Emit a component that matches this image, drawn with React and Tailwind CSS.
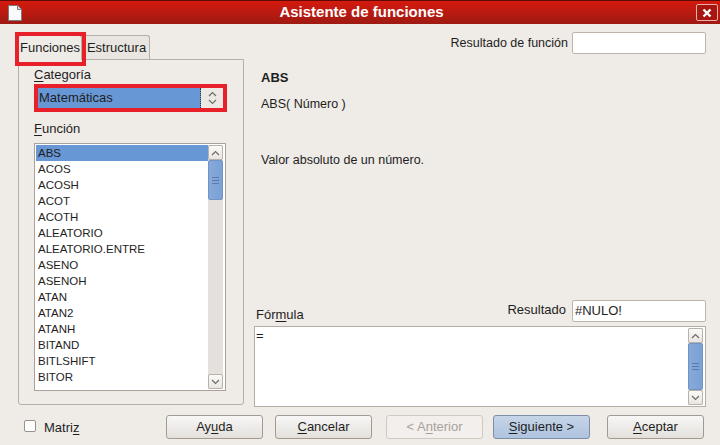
import React from "react";

const font = { fontFamily: '"Liberation Sans", Arial, sans-serif' };

const functions = [
  "ABS",
  "ACOS",
  "ACOSH",
  "ACOT",
  "ACOTH",
  "ALEATORIO",
  "ALEATORIO.ENTRE",
  "ASENO",
  "ASENOH",
  "ATAN",
  "ATAN2",
  "ATANH",
  "BITAND",
  "BITLSHIFT",
  "BITOR",
  "BITRSHIFT",
];

const Key = ({ children }) => <span className="underline underline-offset-2">{children}</span>;

const Arrow = ({ up }) => (
  <svg width="9" height="6" viewBox="0 0 9 6" className="text-[#6f6a64]">
    <path
      d={up ? "M1 5 L4.5 1.5 L8 5" : "M1 1 L4.5 4.5 L8 1"}
      fill="none"
      stroke="currentColor"
      strokeWidth="1.2"
    />
  </svg>
);

const ScrollBar = ({ thumbTop, thumbHeight }) => (
  <div className="flex flex-col w-[15px] h-full bg-[#e4e0db]">
    <div className="h-[15px] flex items-center justify-center border border-[#b9b2aa] rounded-[2px] bg-gradient-to-b from-[#fbfaf9] to-[#e9e6e2]">
      <Arrow up />
    </div>
    <div style={{ height: thumbTop }} />
    <div
      style={{ height: thumbHeight }}
      className="flex flex-col items-center justify-center gap-[2px] border border-[#6f93c4] rounded-[2px] bg-gradient-to-r from-[#86a9da] to-[#7ba1d6]"
    >
      <div className="w-[7px] h-px bg-[#5a7cab]" />
      <div className="w-[7px] h-px bg-[#5a7cab]" />
      <div className="w-[7px] h-px bg-[#5a7cab]" />
    </div>
    <div className="flex-1" />
    <div className="h-[15px] flex items-center justify-center border border-[#b9b2aa] rounded-[2px] bg-gradient-to-b from-[#fbfaf9] to-[#e9e6e2]">
      <Arrow />
    </div>
  </div>
);

const Button = ({ children, className = "", variant = "normal" }) => {
  const styles = {
    normal: "border-[#a39b92] bg-gradient-to-b from-[#f8f7f6] to-[#e3e0dc] text-[#1e1e1e]",
    disabled: "border-[#cfc9c2] bg-[#f2efec] text-[#a8a29b]",
    primary: "border-[#7d8ea6] bg-gradient-to-b from-[#c6d5e8] to-[#aec3df] text-[#1e1e1e]",
  };
  return (
    <div
      className={`h-[24px] w-[97px] shrink-0 flex items-center justify-center rounded-[3px] border text-[13px] ${styles[variant]} ${className}`}
    >
      {children}
    </div>
  );
};

export default function App() {
  return (
    <div style={font} className="w-[720px] h-[445px] bg-[#efebe7] flex flex-col text-[#1e1e1e] overflow-hidden">
      {/* title bar */}
      <div className="h-[24px] flex items-center bg-gradient-to-b from-[#d5190d] to-[#9e1a12] border-t border-[#5e0b06]">
        <svg width="16" height="18" viewBox="0 0 16 18" className="ml-[7px]">
          <path d="M1.5 1.5 H10.5 L14.5 5.5 V16.5 H1.5 Z" fill="#fafafa" stroke="#7c7c7c" />
          <path d="M10.5 1.5 V5.5 H14.5" fill="#d8d8d8" stroke="#7c7c7c" />
        </svg>
        <div className="flex-1 text-center text-white font-bold text-[15px] pl-[4px]">Asistente de funciones</div>
        <div className="w-[22px] h-[17px] mr-[2px] flex items-center justify-center border border-[#e9b0aa] rounded-[2px] bg-[#a8170f]">
          <svg width="10" height="10" viewBox="0 0 10 10">
            <path d="M1.5 1.5 L8.5 8.5 M8.5 1.5 L1.5 8.5" stroke="white" strokeWidth="2.4" />
          </svg>
        </div>
      </div>

      {/* main */}
      <div className="h-[384px] flex">
        {/* left column */}
        <div className="w-[226px] ml-[18px] pt-[11px] flex flex-col">
          <div className="h-[24px] flex items-end text-[13px]">
            <div className="relative h-[25px] w-[64px] -mb-px z-10 flex items-center justify-center border border-b-0 border-[#b7afa6] rounded-t-[3px] bg-[#efebe7]">
              Funciones
              <div className="absolute -left-[4px] -top-[4px] -right-[5px] -bottom-[6px] border-4 border-[#e8202a]" />
            </div>
            <div className="h-[24px] w-[67px] ml-[1px] flex items-center justify-center border border-b-0 border-[#b7afa6] rounded-t-[3px] bg-[#e9e5e0]">
              Estructura
            </div>
          </div>
          <div className="h-[346px] border border-[#b7afa6] rounded-b-[3px] pl-[15px] pt-[7px] flex flex-col">
            <div className="h-[16px] text-[13px] leading-[16px]">
              <Key>C</Key>ategoría
            </div>
            <div className="mt-[1px] w-[193px] h-[28px] border-4 border-[#e8202a] flex">
              <div className="flex-1 bg-[#6797d4] text-[13px] leading-[20px] pl-[1px] border-r border-dotted border-[#333]">
                Matemáticas
              </div>
              <div className="w-[22px] bg-[#ece9e5] flex flex-col items-center justify-center gap-[2px]">
                <Arrow up />
                <Arrow />
              </div>
            </div>
            <div className="mt-[9px] h-[16px] text-[13px] leading-[16px]">
              <Key>F</Key>unción
            </div>
            <div className="mt-[6px] w-[192px] h-[248px] border border-[#aaa298] bg-white flex p-px">
              <div className="flex-1 overflow-hidden">
                {functions.map((f, i) => (
                  <div
                    key={f}
                    className={`h-[16px] leading-[16px] pl-[2px] text-[11.5px] ${i === 0 ? "bg-[#6797d4]" : ""}`}
                  >
                    {f}
                  </div>
                ))}
              </div>
              <div className="mr-[1px]">
                <ScrollBar thumbTop={0} thumbHeight={40} />
              </div>
            </div>
          </div>
        </div>

        {/* right column */}
        <div className="flex-1 flex flex-col pl-[10px] pr-[14px]">
          <div className="mt-[8px] h-[22px] flex items-center justify-end gap-[4px] text-[12.5px]">
            <span>Resultado de función</span>
            <div className="w-[134px] h-[22px] border border-[#bdb5ac] rounded-[2px] bg-white" />
          </div>
          <div className="ml-[7px] mt-[16px] text-[13px] font-bold leading-[16px]">ABS</div>
          <div className="ml-[7px] mt-[10px] text-[12.5px] leading-[16px]">ABS( Número )</div>
          <div className="ml-[7px] mt-[40px] text-[12.5px] leading-[16px]">Valor absoluto de un número.</div>
          <div className="flex-1" />
          <div className="h-[22px] flex items-end text-[13px]">
            <div className="ml-[2px] leading-[16px] -mb-[1px]">
              Fór<Key>m</Key>ula
            </div>
            <div className="flex-1" />
            <div className="self-center mr-[6px] -mt-[2px]">Resultado</div>
            <div className="w-[134px] h-[22px] border border-[#bdb5ac] rounded-[2px] bg-white leading-[20px] pl-[2px]">
              #NULO!
            </div>
          </div>
          <div className="mt-[4px] h-[81px] border border-[#b5aea5] bg-white flex mb-[1px]">
            <div className="flex-1 text-[13px] leading-[16px] pl-px pt-px">=</div>
            <div className="py-[1px] mr-[2px]">
              <ScrollBar thumbTop={0} thumbHeight={47} />
            </div>
          </div>
        </div>
      </div>

      {/* bottom row */}
      <div className="flex-1 flex items-start pt-[7px] text-[13px]">
        <div className="w-[166px] shrink-0 flex items-start">
          <div className="ml-[24px] mt-[5px] w-[12px] h-[12px] border border-[#9a938b] rounded-[2px] bg-white" />
          <div className="ml-[8px] mt-[3px]">
            Matri<Key>z</Key>
          </div>
        </div>
        <Button>
          Ay<Key>u</Key>da
        </Button>
        <Button className="ml-[12px]">
          <Key>C</Key>ancelar
        </Button>
        <Button className="ml-[14px]" variant="disabled">
          &lt; A<Key>n</Key>terior
        </Button>
        <Button className="ml-[10px]" variant="primary">
          <Key>S</Key>iguiente &gt;
        </Button>
        <Button className="ml-[17px]">
          <Key>A</Key>ceptar
        </Button>
      </div>
    </div>
  );
}
